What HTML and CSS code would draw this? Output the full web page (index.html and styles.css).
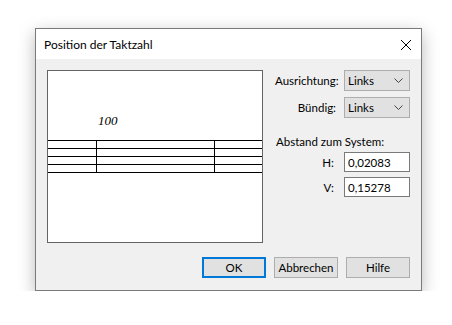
FILE: index.html
```html
<!DOCTYPE html>
<html lang="de">
<head>
    <meta charset="UTF-8">
    <title>Position der Taktzahl</title>
    <link rel="stylesheet" href="styles.css">
</head>
<body>

    <div class="dialog">
        <div class="titlebar">
            <span class="title">Position der Taktzahl</span>
            <svg class="close" width="12" height="12" viewBox="0 0 12 12">
                <path d="M1 1 L11 11 M11 1 L1 11" stroke="#000" stroke-width="1" fill="none"/>
            </svg>
        </div>

        <div class="content">
            <!-- Preview of the bar number over the staff -->
            <div class="preview">
                <svg width="214" height="171" viewBox="0 0 214 171">
                    <text x="50" y="54" class="barnum">100</text>
                    <g stroke="#000" stroke-width="1">
                        <line x1="0" y1="69.5" x2="214" y2="69.5"/>
                        <line x1="0" y1="77.5" x2="214" y2="77.5"/>
                        <line x1="0" y1="85.5" x2="214" y2="85.5"/>
                        <line x1="0" y1="93.5" x2="214" y2="93.5"/>
                        <line x1="0" y1="101.5" x2="214" y2="101.5"/>
                        <line x1="48.5" y1="69" x2="48.5" y2="102"/>
                        <line x1="166.5" y1="69" x2="166.5" y2="102"/>
                    </g>
                </svg>
            </div>

            <div class="options">
                <div class="row">
                    <label>Ausrichtung:</label>
                    <div class="select">Links
                        <svg class="chev" width="9" height="5" viewBox="0 0 9 5"><path d="M0.5 0.5 L4.5 4.5 L8.5 0.5" stroke="#444" fill="none"/></svg>
                    </div>
                </div>
                <div class="row">
                    <label>Bündig:</label>
                    <div class="select">Links
                        <svg class="chev" width="9" height="5" viewBox="0 0 9 5"><path d="M0.5 0.5 L4.5 4.5 L8.5 0.5" stroke="#444" fill="none"/></svg>
                    </div>
                </div>

                <div class="group-title">Abstand zum System:</div>
                <div class="row small">
                    <label>H:</label>
                    <div class="input">0,02083</div>
                </div>
                <div class="row small">
                    <label>V:</label>
                    <div class="input">0,15278</div>
                </div>
            </div>
        </div>

        <div class="buttons">
            <button class="default">OK</button>
            <button>Abbrechen</button>
            <button>Hilfe</button>
        </div>
    </div>

</body>
</html>
```

FILE: styles.css
```css
body {
    margin: 0;
    background: #fff;
    font-family: Lato, "Noto Sans", sans-serif;
    font-size: 11.5px;
    color: #000;
}
.dialog {
    margin: 28px 0 0 35px;
    width: 385px;
    height: 261px;
    border: 1px solid #7a7a7a;
    background: #f0f0f0;
    box-shadow: 0 5px 16px rgba(0, 0, 0, 0.28);
    display: flex;
    flex-direction: column;
}
.titlebar {
    height: 30px;
    background: #fff;
    display: flex;
    align-items: center;
    justify-content: space-between;
    padding: 0 9px 0 8px;
}
.title {
    font-size: 12px;
}
.close {
    display: block;
    margin-top: 1px;
}
.content {
    display: flex;
    padding: 11px 11px 0 11px;
}
.preview {
    width: 214px;
    height: 171px;
    border: 1px solid #646464;
    background: #fff;
}
.preview svg {
    display: block;
}
.barnum {
    font-family: "Liberation Serif", serif;
    font-style: italic;
    font-size: 13px;
}
.options {
    margin-left: 12px;
    display: flex;
    flex-direction: column;
}
.row {
    display: grid;
    grid-template-columns: 61px 66px;
    column-gap: 8px;
    align-items: center;
    margin-bottom: 6px;
}
.row.small {
    margin-bottom: 5px;
}
.row label {
    text-align: right;
}
.row.small label {
    padding-right: 2px;
}
.select {
    height: 21px;
    box-sizing: border-box;
    border: 1px solid #adadad;
    background: #e1e1e1;
    display: flex;
    align-items: center;
    justify-content: space-between;
    padding: 0 6px 0 3px;
}
.chev {
    display: block;
}
.group-title {
    margin: 10px 0 2px 1px;
    line-height: 16px;
}
.input {
    height: 20px;
    box-sizing: border-box;
    border: 1px solid #7a7a7a;
    background: #fff;
    display: flex;
    align-items: center;
    padding: 0 3px;
}
.buttons {
    margin-top: auto;
    display: flex;
    justify-content: flex-end;
    gap: 8px;
    padding: 0 11px 12px 0;
}
button {
    width: 64px;
    height: 21px;
    box-sizing: border-box;
    border: 1px solid #adadad;
    background: #e1e1e1;
    font-family: inherit;
    font-size: 11.5px;
    color: #000;
    padding: 0;
}
button.default {
    border: 2px solid #0078d7;
}
```
